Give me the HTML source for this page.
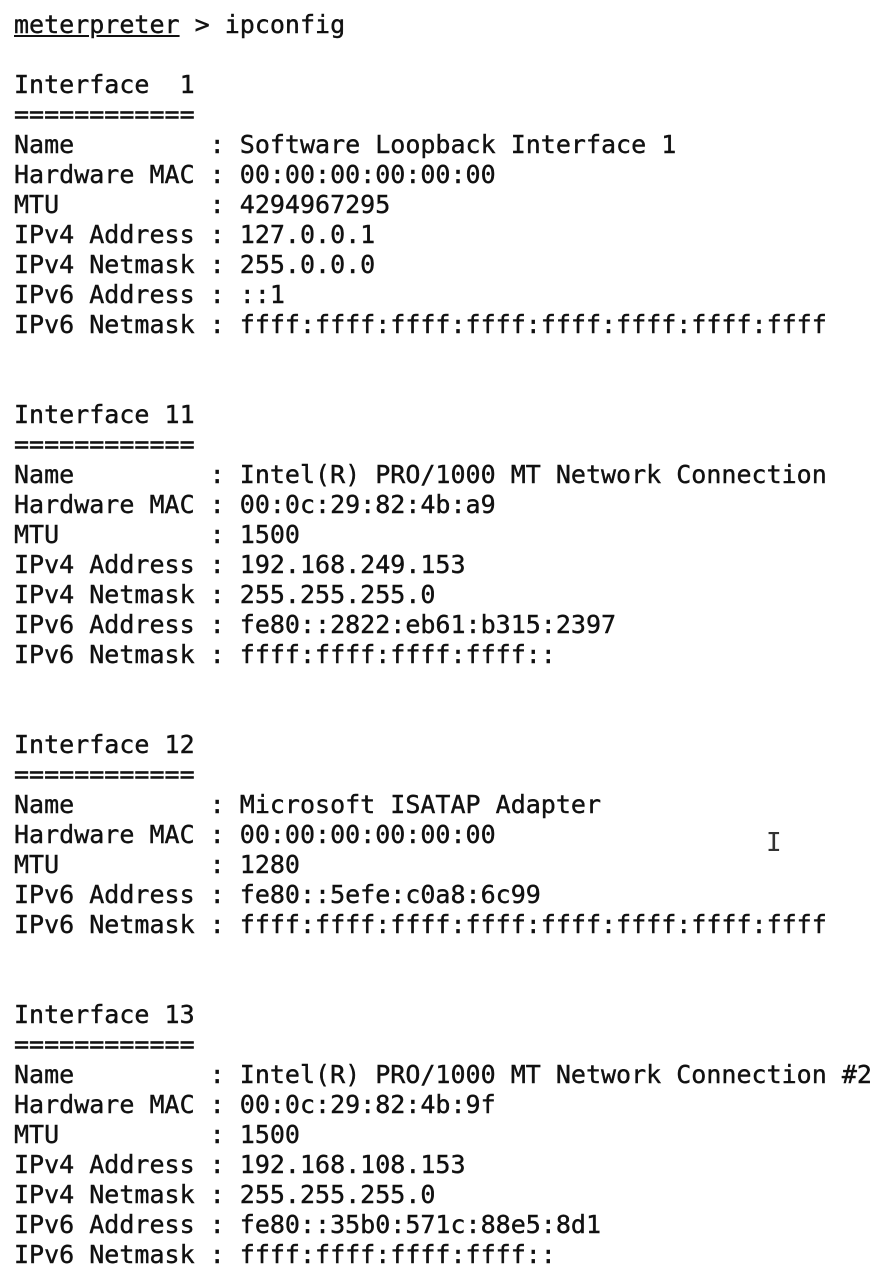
<!DOCTYPE html>
<html><head><meta charset="utf-8"><style>
html,body{margin:0;padding:0;background:#fff;width:889px;height:1284px;overflow:hidden}
pre{margin:0;padding:10px 0 0 14px;font-family:"DejaVu Sans Mono","Liberation Mono",monospace;font-size:25px;line-height:30px;color:#111;letter-spacing:0;-webkit-text-stroke:0.4px #111}
.u{text-decoration:underline}
.cur{position:absolute;left:766px;top:828px;font-family:"DejaVu Sans Mono",monospace;font-size:26px;color:#333}
</style></head><body><pre><span class="u">meterpreter</span> &gt; ipconfig

Interface  1
============
Name         : Software Loopback Interface 1
Hardware MAC : 00:00:00:00:00:00
MTU          : 4294967295
IPv4 Address : 127.0.0.1
IPv4 Netmask : 255.0.0.0
IPv6 Address : ::1
IPv6 Netmask : ffff:ffff:ffff:ffff:ffff:ffff:ffff:ffff


Interface 11
============
Name         : Intel(R) PRO/1000 MT Network Connection
Hardware MAC : 00:0c:29:82:4b:a9
MTU          : 1500
IPv4 Address : 192.168.249.153
IPv4 Netmask : 255.255.255.0
IPv6 Address : fe80::2822:eb61:b315:2397
IPv6 Netmask : ffff:ffff:ffff:ffff::


Interface 12
============
Name         : Microsoft ISATAP Adapter
Hardware MAC : 00:00:00:00:00:00
MTU          : 1280
IPv6 Address : fe80::5efe:c0a8:6c99
IPv6 Netmask : ffff:ffff:ffff:ffff:ffff:ffff:ffff:ffff


Interface 13
============
Name         : Intel(R) PRO/1000 MT Network Connection #2
Hardware MAC : 00:0c:29:82:4b:9f
MTU          : 1500
IPv4 Address : 192.168.108.153
IPv4 Netmask : 255.255.255.0
IPv6 Address : fe80::35b0:571c:88e5:8d1
IPv6 Netmask : ffff:ffff:ffff:ffff::</pre><div class="cur">I</div></body></html>
